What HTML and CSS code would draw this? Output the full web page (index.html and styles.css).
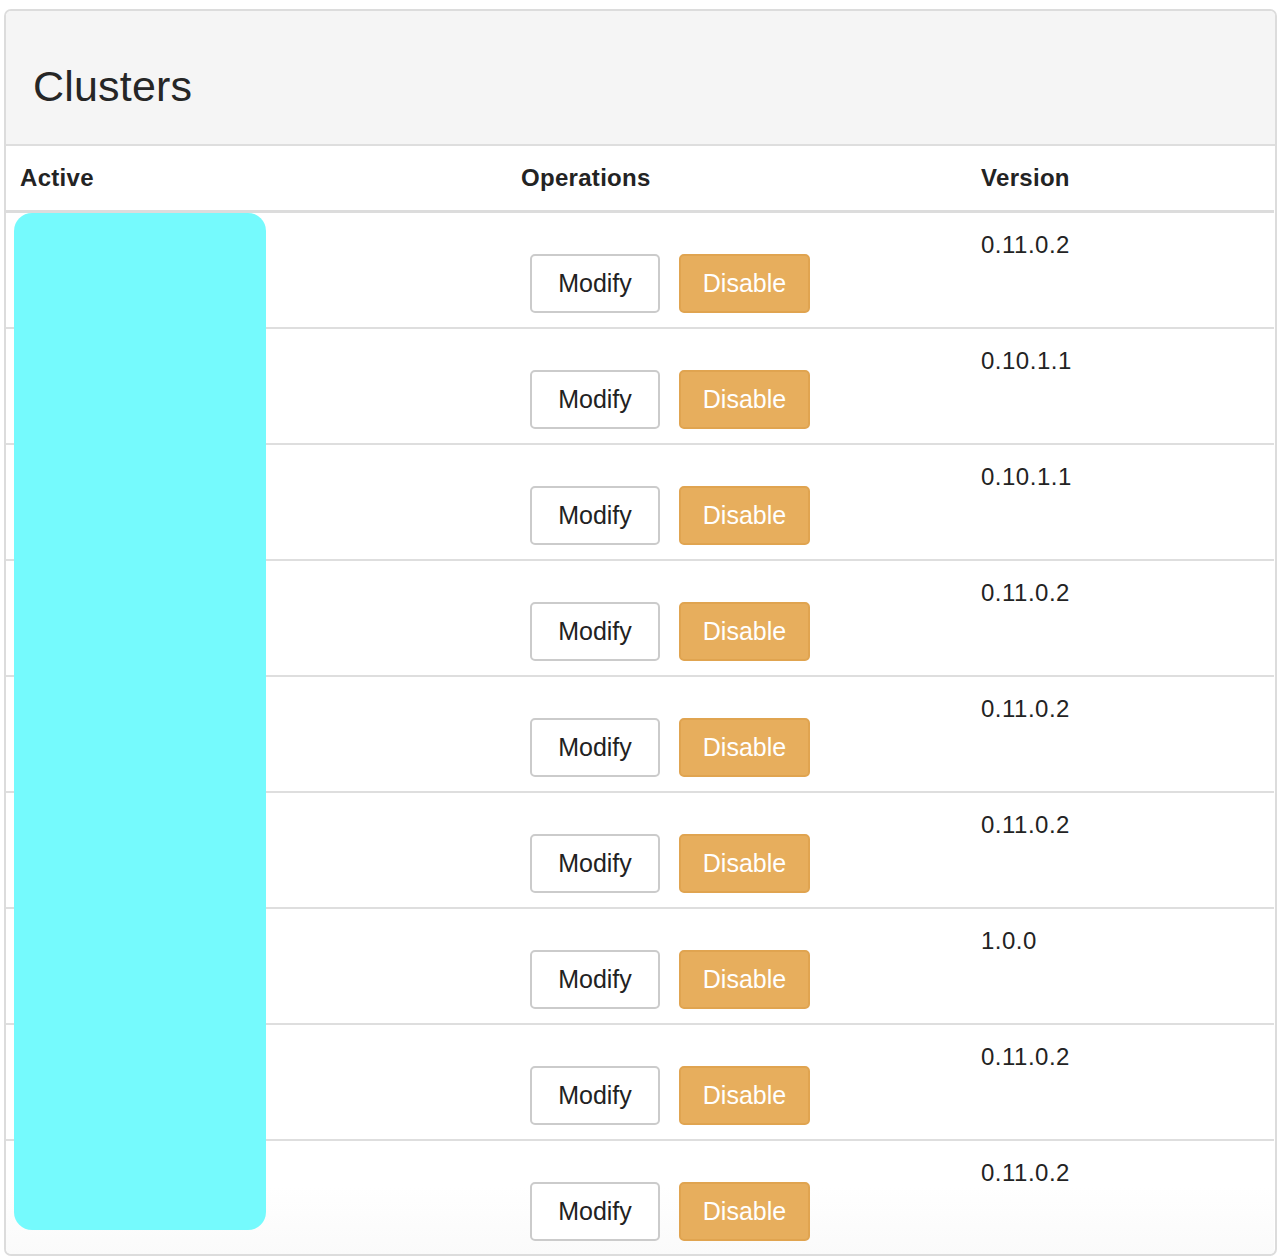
FILE: index.html
```html
<!DOCTYPE html>
<html>
<head>
<meta charset="utf-8">
<link rel="stylesheet" href="styles.css">
</head>
<body>
<div class="page">
  <div class="panel">
    <div class="panel-heading"><h1 class="title">Clusters</h1></div>
    <div class="table">
      <div class="thead">
        <div class="cell c-active">Active</div>
        <div class="cell c-ops">Operations</div>
        <div class="cell c-ver">Version</div>
      </div>
      <div class="row"><div class="cell c-active"></div><div class="cell c-ops"><div class="btns"><span class="btn btn-default">Modify</span><span class="btn btn-warning">Disable</span></div></div><div class="cell c-ver">0.11.0.2</div></div>
      <div class="row"><div class="cell c-active"></div><div class="cell c-ops"><div class="btns"><span class="btn btn-default">Modify</span><span class="btn btn-warning">Disable</span></div></div><div class="cell c-ver">0.10.1.1</div></div>
      <div class="row"><div class="cell c-active"></div><div class="cell c-ops"><div class="btns"><span class="btn btn-default">Modify</span><span class="btn btn-warning">Disable</span></div></div><div class="cell c-ver">0.10.1.1</div></div>
      <div class="row"><div class="cell c-active"></div><div class="cell c-ops"><div class="btns"><span class="btn btn-default">Modify</span><span class="btn btn-warning">Disable</span></div></div><div class="cell c-ver">0.11.0.2</div></div>
      <div class="row"><div class="cell c-active"></div><div class="cell c-ops"><div class="btns"><span class="btn btn-default">Modify</span><span class="btn btn-warning">Disable</span></div></div><div class="cell c-ver">0.11.0.2</div></div>
      <div class="row"><div class="cell c-active"></div><div class="cell c-ops"><div class="btns"><span class="btn btn-default">Modify</span><span class="btn btn-warning">Disable</span></div></div><div class="cell c-ver">0.11.0.2</div></div>
      <div class="row"><div class="cell c-active"></div><div class="cell c-ops"><div class="btns"><span class="btn btn-default">Modify</span><span class="btn btn-warning">Disable</span></div></div><div class="cell c-ver">1.0.0</div></div>
      <div class="row"><div class="cell c-active"></div><div class="cell c-ops"><div class="btns"><span class="btn btn-default">Modify</span><span class="btn btn-warning">Disable</span></div></div><div class="cell c-ver">0.11.0.2</div></div>
      <div class="row last"><div class="cell c-active"></div><div class="cell c-ops"><div class="btns"><span class="btn btn-default">Modify</span><span class="btn btn-warning">Disable</span></div></div><div class="cell c-ver">0.11.0.2</div></div>
      <div class="redact"></div>
    </div>
  </div>
</div>
</body>
</html>
```
FILE: styles.css
```css
* { box-sizing: border-box; }
html, body { margin: 0; padding: 0; background: #fff; }
body {
  font-family: "Liberation Sans", Arial, Helvetica, sans-serif;
  color: #232323;
  font-size: 24px;
}
.page {
  padding: 9px 3px 0 4px;
}
.panel {
  border: 2px solid #dcdcdc;
  border-radius: 7px;
  overflow: hidden;
  background: #fff;
}
.panel-heading {
  background: #f5f5f5;
  height: 135px;
  border-bottom: 2px solid #dedede;
  display: flex;
  align-items: center;
  padding: 0 0 0 27px;
}
.title {
  margin: 17px 0 0 0;
  font-weight: normal;
  font-size: 43px;
  color: #262626;
  letter-spacing: 0.2px;
}
.table {
  position: relative;
  margin-right: 1px;
}
.thead {
  display: flex;
  height: 67px;
  border-bottom: 3px solid #dcdcdc;
  font-weight: bold;
  align-items: center;
  letter-spacing: 0.3px;
}
.cell { padding: 0 14px; }
.c-active { width: 501px; }
.c-ops { width: 460px; }
.c-ver { flex: 1; }
.row {
  display: flex;
  height: 116px;
  border-bottom: 2px solid #dedede;
}
.row.last {
  border-bottom: none;
  height: 113px;
  background: linear-gradient(to bottom, #fff 40%, #fafafa 100%);
}
.row .c-ver {
  padding-top: 17px;
  line-height: 30px;
  letter-spacing: 0.5px;
}
.btns {
  display: flex;
  gap: 19px;
  margin-top: 41px;
  margin-left: 9px;
}
.btn {
  display: flex;
  align-items: center;
  justify-content: center;
  width: 130px;
  height: 59px;
  border-radius: 5px;
  font-size: 25px;
  padding-bottom: 1px;
}
.btn-warning { width: 131px; }
.btn-default {
  background: #fff;
  border: 2px solid #cbcbcb;
  color: #222;
}
.btn-warning {
  background: #e7ae5d;
  border: 2px solid #e0a450;
  color: #fff;
}
.redact {
  position: absolute;
  left: 8px;
  top: 67px;
  width: 252px;
  height: 1017px;
  background: #75fafd;
  border-radius: 18px;
}
```
